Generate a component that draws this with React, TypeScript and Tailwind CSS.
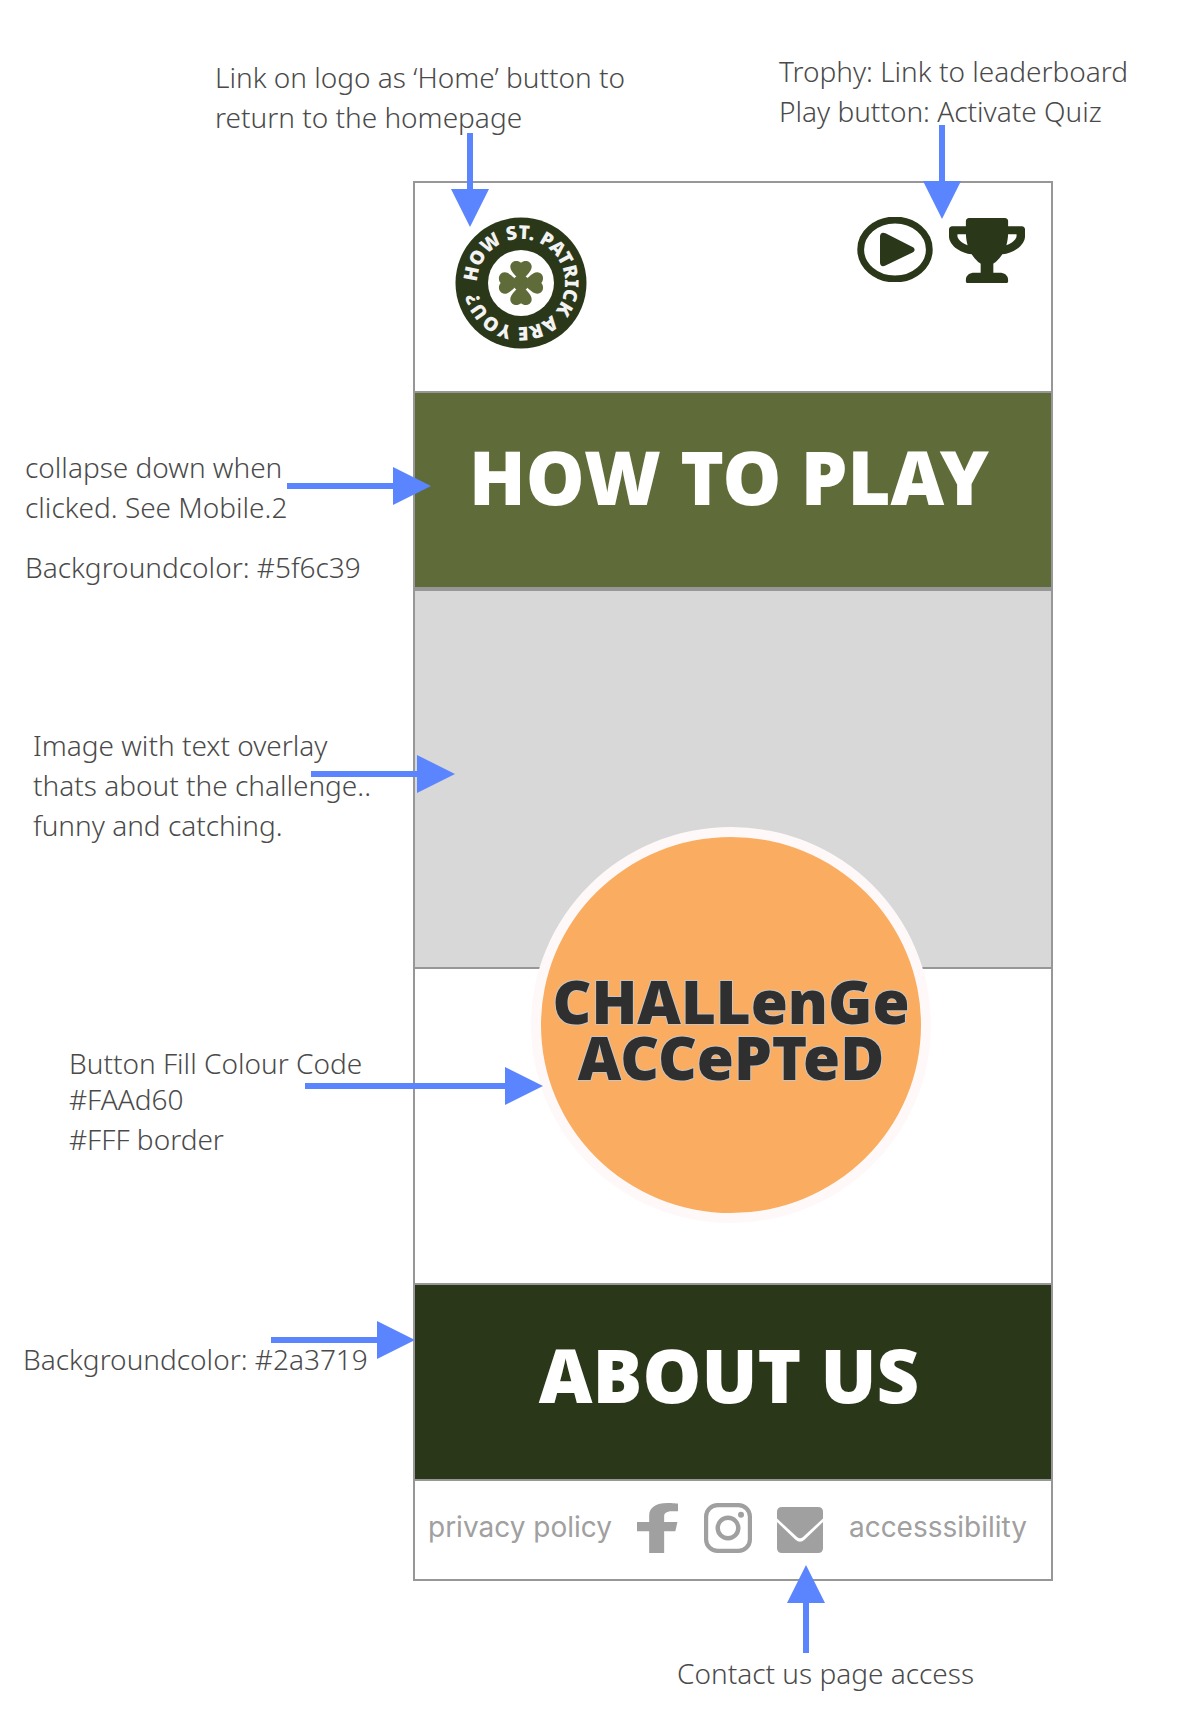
import type { ReactNode } from "react";

type Direction = "right" | "down" | "up";

const headShape: Record<Direction, string> = {
  right: "M0 0 38 19 0 38Z",
  down: "M0 0H38L19 38Z",
  up: "M0 38H38L19 0Z",
};

const flow: Record<Direction, string> = {
  right: "flex-row",
  down: "flex-col",
  up: "flex-col-reverse",
};

/** Callout arrow; its length and place come from className. */
function Arrow({ direction, className }: { direction: Direction; className: string }) {
  return (
    <div aria-hidden="true" className={`pointer-events-none absolute z-10 flex items-center ${flow[direction]} ${className}`}>
      <div className={direction === "right" ? "h-1.5 grow bg-[#5b84ff]" : "w-1.5 grow bg-[#5b84ff]"} />
      <svg viewBox="0 0 38 38" className="size-[38px] shrink-0" fill="#5b84ff">
        <path d={headShape[direction]} />
      </svg>
    </div>
  );
}

function Row({ note, children }: { note?: ReactNode; children: ReactNode }) {
  return (
    <div className="flex pr-[136px]">
      <aside className="relative w-[413px] shrink-0">{note}</aside>
      <div className="relative min-w-0 grow border-x-2 border-t-2 border-[#979797]">{children}</div>
    </div>
  );
}

function Logo() {
  return (
    <svg viewBox="-66 -66 132 132" className="size-[132px]" role="img" aria-label="How St. Patrick are you?">
      <defs>
        <path id="ring" d="M-44 0A44 44 0 0 1 44 0A44 44 0 0 1 -44 0" />
      </defs>
      <circle r="65.5" fill="#2a3719" />
      <circle r="33" fill="#fff" />
      <text fill="#f3f3f3" className="font-['Noto_Sans',sans-serif] text-[19px] font-black">
        <textPath href="#ring" startOffset="1">HOW ST. PATRICK ARE YOU?</textPath>
      </text>
      <g fill="#5f6c39">
        <circle r="8" />
        {[0, 90, 180, 270].map((angle) => (
          <path
            key={angle}
            transform={`rotate(${angle})`}
            d="M0 0C-3-6-11-11-10.7-16.5C-10.4-22-3.8-23.8 0-20.3C3.8-23.8 10.4-22 10.7-16.5C11-11 3-6 0 0Z"
          />
        ))}
      </g>
    </svg>
  );
}

function PlayIcon() {
  return (
    <svg viewBox="0 0 76 65" className="h-[65px] w-[76px]" aria-hidden="true">
      <ellipse cx="38" cy="32.5" rx="34.3" ry="29.5" fill="none" stroke="#2a3719" strokeWidth="6.8" />
      <path d="M23 19.5C23 16 25.500 14.800 28.500 16.300L55.500 30C58.300 31.500 58.300 34 55.500 35.500L28.500 48.500C25.500 50 23 49 23 45.500Z" fill="#2a3719" />
    </svg>
  );
}

function TrophyIcon() {
  return (
    <svg viewBox="0 0 576 512" preserveAspectRatio="none" className="mt-px h-[65px] w-[76px]" fill="#2a3719" aria-hidden="true">
      <path d="M552 64H448V24c0-13.3-10.7-24-24-24H152c-13.3 0-24 10.700-24 24v40H24C10.700 64 0 74.700 0 88v56c0 35.700 22.500 72.400 61.900 100.700 31.500 22.700 69.800 37.100 110 41.700C203.300 338.500 240 360 240 360v72h-48c-35.300 0-64 20.700-64 56v12c0 6.600 5.400 12 12 12h296c6.600 0 12-5.400 12-12v-12c0-35.300-28.700-56-64-56h-48v-72s36.700-21.500 68.100-73.600c40.300-4.600 78.600-19 110-41.700 39.300-28.300 61.900-65 61.900-100.700V88c0-13.300-10.700-24-24-24zM99.300 192.800C74.900 175.200 64 155.600 64 144v-16h64.200c1 32.600 5.800 61.200 12.800 86.200-15.100-5.200-29.200-12.400-41.700-21.400zM512 144c0 16.100-17.700 36.100-35.300 48.800-12.500 9-26.700 16.200-41.800 21.400 7-25 11.800-53.600 12.800-86.200H512v16z" />
    </svg>
  );
}

function FacebookIcon() {
  return (
    <svg viewBox="22.890 0 274.220 512" preserveAspectRatio="none" className="h-[50px] w-[41px]" fill="currentColor" aria-hidden="true">
      <path d="M279.140 288l14.220-92.660h-88.910v-60.130c0-25.350 12.420-50.060 52.240-50.060h40.420V6.260S260.430 0 225.360 0c-73.220 0-121.080 44.380-121.080 124.720v70.620H22.890V288h81.390v224h100.170V288z" />
    </svg>
  );
}

function InstagramIcon() {
  return (
    <svg viewBox="0 0 48 50" className="h-[50px] w-12" fill="none" stroke="currentColor" aria-hidden="true">
      <rect x="2.100" y="2.100" width="43.800" height="45.800" rx="11.500" strokeWidth="4.200" />
      <circle cx="24" cy="25" r="10.300" strokeWidth="4.400" />
      <circle cx="37" cy="11.700" r="3" fill="currentColor" stroke="none" />
    </svg>
  );
}

function MailIcon() {
  return (
    <svg viewBox="0 0 46 46" className="size-[46px]" fill="currentColor" aria-hidden="true">
      <path d="M0 11.500V5Q0 0 5 0H41Q46 0 46 5V11.500L26 30Q23 32.500 20 30Z" />
      <path d="M0 15L18.500 32.800Q23 36.600 27.500 32.800L46 15V41Q46 46 41 46H5Q0 46 0 41Z" />
    </svg>
  );
}

export default function App() {
  return (
    <main className="min-h-screen bg-white font-['Noto_Sans',sans-serif] text-[28px] leading-10 font-light text-[#4a4a4a]">
      <div className="relative flex h-[181px] items-start justify-between pt-[51px] pr-[61px] pl-[215px]">
        <p className="pt-1.5">
          Link on logo as ‘Home’ button to
          <br />
          return to the homepage
        </p>
        <p>
          Trophy: Link to leaderboard
          <br />
          Play button: Activate Quiz
        </p>
        <Arrow direction="down" className="top-[133px] left-[451px] h-[94px]" />
        <Arrow direction="down" className="top-[125px] right-[228px] h-[94px]" />
      </div>

      <Row>
        <header className="flex h-52 items-start justify-between pt-[34px] pr-[26px] pl-10">
          <a href="#home">
            <Logo />
          </a>
          <nav className="flex gap-4">
            <a href="#quiz" aria-label="Play the quiz">
              <PlayIcon />
            </a>
            <a href="#leaderboard" aria-label="Leaderboard">
              <TrophyIcon />
            </a>
          </nav>
        </header>
      </Row>

      <Row
        note={
          <>
            <p className="pt-14 pl-[25px]">
              collapse down when
              <br />
              clicked. See Mobile.2
            </p>
            <p className="pt-5 pl-[25px]">Backgroundcolor: #5f6c39</p>
            <Arrow direction="right" className="top-[76px] left-[287px] w-36" />
          </>
        }
      >
        <button
          type="button"
          className="flex h-[196px] w-full items-start justify-center border-b-2 border-[#979797] bg-[#5f6c39] pt-[47px] pr-2 text-[74px] leading-[74px] font-black whitespace-nowrap text-white"
        >
          HOW TO PLAY
        </button>
      </Row>

      <Row
        note={
          <>
            <p className="pt-[136px] pl-[33px]">
              Image with text overlay
              <br />
              thats about the challenge..
              <br />
              funny and catching.
            </p>
            <Arrow direction="right" className="top-[166px] left-[311px] w-36" />
          </>
        }
      >
        <div className="h-[376px] bg-[#d8d8d8]" />
      </Row>

      <Row
        note={
          <>
            <p className="pt-[76px] pl-[69px]">Button Fill Colour Code</p>
            <p className="-mt-1 pl-[69px]">
              #FAAd60
              <br />
              #FFF border
            </p>
            <Arrow direction="right" className="top-[100px] left-[305px] w-[238px]" />
          </>
        }
      >
        <div className="flex justify-center pr-1 pb-[60px]">
          <button
            type="button"
            className="-mt-[142px] h-[396px] w-[400px] shrink-0 rounded-[50%] border-[10px] border-[#fff8f8] bg-[#faad60] pt-2 text-[60px] leading-[56px] font-black whitespace-nowrap text-[#2f2f2f] [-webkit-text-stroke:2px_#c9c4c0] [paint-order:stroke_fill]"
          >
            CHALLenGe
            <br />
            ACCePTeD
          </button>
        </div>
      </Row>

      <Row
        note={
          <>
            <p className="pt-14 pl-[23px]">Backgroundcolor: #2a3719</p>
            <Arrow direction="right" className="top-[38px] left-[271px] w-36" />
          </>
        }
      >
        <button
          type="button"
          className="flex h-[194px] w-full items-start justify-center bg-[#2a3719] pt-[53px] pr-2 text-[74px] leading-[74px] font-black whitespace-nowrap text-white"
        >
          ABOUT US
        </button>
      </Row>

      <Row>
        <footer className="flex h-[100px] items-start justify-between border-b-2 border-[#979797] pt-[22px] pr-6 pl-[13px] font-['Inter',sans-serif] text-[28px] font-normal text-[#a0a0a0]">
          <a href="#privacy" className="pt-1">
            privacy policy
          </a>
          <a href="#facebook" aria-label="Facebook">
            <FacebookIcon />
          </a>
          <a href="#instagram" aria-label="Instagram">
            <InstagramIcon />
          </a>
          <a href="#contact" aria-label="Contact us" className="pt-1">
            <MailIcon />
          </a>
          <a href="#accessibility" className="pt-1">
            accesssibility
          </a>
        </footer>
        <Arrow direction="up" className="top-[84px] left-[372px] h-[88px]" />
      </Row>

      <p className="pt-[72px] pl-[677px]">Contact us page access</p>
    </main>
  );
}
